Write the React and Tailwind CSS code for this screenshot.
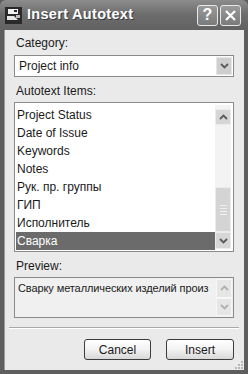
import React from "react";

const Chevron = ({ up = false, color = "#5a5a5a" }) => (
  <svg width="9" height="6" viewBox="0 0 9 6">
    <path
      d={up ? "M1 5 L4.5 1.5 L8 5" : "M1 1 L4.5 4.5 L8 1"}
      fill="none"
      stroke={color}
      strokeWidth="1.8"
    />
  </svg>
);

const items = [
  "Project Status",
  "Date of Issue",
  "Keywords",
  "Notes",
  "Рук. пр. группы",
  "ГИП",
  "Исполнитель",
  "Сварка",
];

export default function App() {
  return (
    <div
      className="w-[248px] h-[374px] bg-[#5e5e5e] flex flex-col overflow-hidden text-[12px] text-[#1a1a1a]"
      style={{ fontFamily: '"Liberation Sans", Arial, sans-serif' }}
    >
      {/* Title bar */}
      <div className="h-[30px] shrink-0 flex items-center bg-gradient-to-b from-[#8c8c8c] via-[#6c6c6c] to-[#626262] rounded-t-[6px] pl-[5px] pr-[7px]">
        <svg width="17" height="17" viewBox="0 0 17 17" className="shrink-0">
          <rect x="0" y="0" width="17" height="17" fill="#2a2a2a" />
          <rect x="3" y="2" width="10" height="5" fill="#f2f2f2" />
          <rect x="9" y="3" width="3" height="2" fill="#2a2a2a" />
          <path d="M2 9 H9 L13 13 H2 Z" fill="#e6e6e6" />
          <rect x="11" y="8" width="4" height="3" fill="#bdbdbd" />
        </svg>
        <span className="ml-[5px] text-white font-bold text-[14.5px] tracking-[0.3px] [text-shadow:1px_1px_0_#3a3a3a]">
          Insert Autotext
        </span>
        <div className="ml-auto flex gap-[2px]">
          <div className="w-[21px] h-[21px] rounded-[3px] border border-[#e8e8e8] bg-gradient-to-b from-[#9a9a9a] to-[#7a7a7a] flex items-center justify-center text-white font-bold text-[16px] leading-none">
            ?
          </div>
          <div className="w-[21px] h-[21px] rounded-[3px] border border-[#e8e8e8] bg-gradient-to-b from-[#9a9a9a] to-[#7a7a7a] flex items-center justify-center">
            <svg width="13" height="13" viewBox="0 0 13 13">
              <path d="M2 2 L11 11 M11 2 L2 11" stroke="#fff" strokeWidth="2.2" />
            </svg>
          </div>
        </div>
      </div>

      {/* Body */}
      <div className="flex-1 mx-[4px] mb-[4px] bg-[#eaeaea] flex flex-col pl-[9px] pr-[10px] pt-[6px] relative border-l border-[#9a9a9a]">
        <div className="pl-[2px] h-[14px] leading-[14px]">Category:</div>
        <div className="mt-[5px] h-[22px] bg-white border border-[#8a8a8a] flex items-center pr-[1px]">
          <span className="pl-[4px] flex-1">Project info</span>
          <div className="w-[16px] h-[18px] bg-[#cfcfcf] border border-[#e6e6e6] flex items-center justify-center">
            <Chevron />
          </div>
        </div>

        <div className="mt-[7px] pl-[2px] h-[14px] leading-[14px]">Autotext Items:</div>
        <div className="mt-[4px] h-[150px] bg-white border border-[#8a8a8a] flex p-[2px] pl-px">
          <div className="flex-1 flex flex-col pt-[1px]">
            {items.map((t, i) => (
              <div
                key={t}
                className={
                  "h-[18px] leading-[18px] pl-[1px] " +
                  (i === items.length - 1 ? "bg-[#6b6b6b] text-white" : "")
                }
              >
                {t}
              </div>
            ))}
          </div>
          <div className="w-[16px] flex flex-col bg-[#f3f3f3]">
            <div className="h-[16px] mt-[4px] bg-[#d6d6d6] border border-[#ececec] flex items-center justify-center">
              <Chevron up />
            </div>
            <div className="flex-1" />
            <div className="h-[45px] bg-[#d4d4d4] border border-[#ececec] flex flex-col items-center justify-center gap-[2px]">
              <div className="w-[7px] h-px bg-[#f0f0f0]" />
              <div className="w-[7px] h-px bg-[#f0f0f0]" />
              <div className="w-[7px] h-px bg-[#f0f0f0]" />
              <div className="w-[7px] h-px bg-[#f0f0f0]" />
            </div>
            <div className="h-[17px] bg-[#d6d6d6] border border-[#ececec] flex items-center justify-center">
              <Chevron />
            </div>
          </div>
        </div>

        <div className="mt-[7px] pl-[2px] h-[14px] leading-[14px]">Preview:</div>
        <div className="mt-[4px] h-[41px] bg-[#f0f0f0] border border-[#8a8a8a] flex p-[1px]">
          <div className="flex-1 overflow-hidden whitespace-nowrap pl-[2px] pt-[2px] leading-[14px] text-[11px] tracking-[-0.1px]">
            Сварку металлических изделий произ
          </div>
          <div className="w-[16px] flex flex-col">
            <div className="h-[19px] bg-[#e6e6e6] border border-[#f6f6f6] flex items-center justify-center">
              <Chevron up color="#b0b0b0" />
            </div>
            <div className="h-[19px] bg-[#e6e6e6] border border-[#f6f6f6] flex items-center justify-center">
              <Chevron color="#b0b0b0" />
            </div>
          </div>
        </div>

        <div className="mt-[9px] -mx-[5px] h-px bg-[#a8a8a8] border-b border-white box-content" />

        <div className="mt-[10px] flex justify-end gap-[15px]">
          <div className="w-[67px] h-[21px] rounded-[3px] border border-[#3c3c3c] bg-gradient-to-b from-white via-[#f2f2f2] to-[#d8d8d8] flex items-center justify-center">
            Cancel
          </div>
          <div className="w-[68px] h-[21px] rounded-[3px] border border-[#3c3c3c] bg-gradient-to-b from-white via-[#f2f2f2] to-[#d8d8d8] flex items-center justify-center">
            Insert
          </div>
        </div>

        {/* resize grip */}
        <svg width="10" height="10" viewBox="0 0 10 10" className="absolute right-[1px] bottom-[1px]">
          {[
            [8, 2], [8, 5], [5, 5], [8, 8], [5, 8], [2, 8],
          ].map(([x, y], i) => (
            <rect key={i} x={x} y={y} width="2" height="2" fill="#b8b8b8" />
          ))}
        </svg>
      </div>
    </div>
  );
}
